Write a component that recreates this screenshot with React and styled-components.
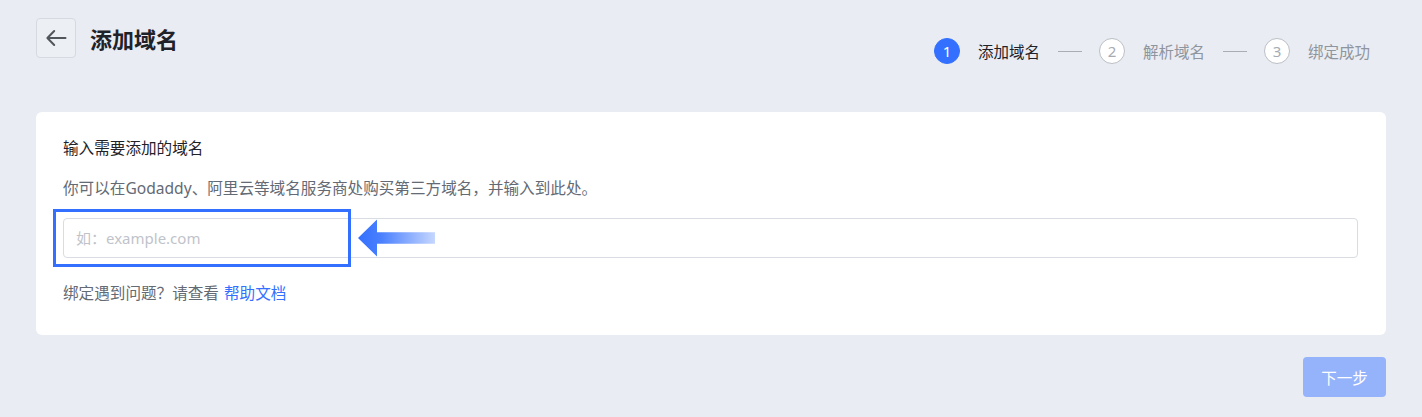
import React from "react";
import styled, { createGlobalStyle } from "styled-components";

const GlobalStyle = createGlobalStyle`
  html, body { margin: 0; padding: 0; }
  body {
    background: #e9ecf2;
    font-family: "Noto Sans", "Noto Sans CJK SC", sans-serif;
    color: #1f2329;
  }
`;

const Page = styled.div`
  padding: 18px 36px 20px 36px;
  box-sizing: border-box;
  width: 1422px;
  min-height: 417px;
  display: flex;
  flex-direction: column;
`;

const Header = styled.div`
  display: flex;
  justify-content: space-between;
  align-items: flex-start;
  height: 94px;
`;

const TitleGroup = styled.div`
  display: flex;
  align-items: center;
  gap: 14px;
`;

const BackButton = styled.button`
  width: 40px;
  height: 40px;
  box-sizing: border-box;
  border: 1px solid #d5d9e0;
  border-radius: 4px;
  background: #eceff4;
  display: flex;
  align-items: center;
  justify-content: center;
  padding: 0;
  cursor: pointer;
`;

const Title = styled.h1`
  margin: 0;
  font-size: 22px;
  font-weight: 700;
  line-height: 30px;
  color: #1f2329;
  font-family: "Noto Sans CJK SC", sans-serif;
`;

const Steps = styled.div`
  display: flex;
  align-items: center;
  margin-top: 20px;
  margin-right: 16px;
`;

const Step = styled.div`
  display: flex;
  align-items: center;
  gap: 18px;
`;

const StepCircle = styled.span`
  width: 26px;
  height: 26px;
  box-sizing: border-box;
  border-radius: 50%;
  display: flex;
  align-items: center;
  justify-content: center;
  font-size: 15px;
  background: ${(p) => (p.$active ? "#3370ff" : "#ffffff")};
  border: 1px solid ${(p) => (p.$active ? "#3370ff" : "#bbbfc4")};
  color: ${(p) => (p.$active ? "#ffffff" : "#a6abb3")};
`;

const StepLabel = styled.span`
  font-size: 15.5px;
  line-height: 22px;
  color: ${(p) => (p.$active ? "#1f2329" : "#8f959e")};
  font-family: "Noto Sans CJK SC", sans-serif;
`;

const Connector = styled.span`
  width: 24px;
  height: 1px;
  background: #a9aeb6;
  margin: 0 17px 0 18px;
`;

const Card = styled.div`
  background: #ffffff;
  border-radius: 6px;
  padding: 24px 28px 32px 27px;
`;

const CardTitle = styled.div`
  font-size: 15.6px;
  line-height: 22px;
  color: #1f2329;
  font-family: "Noto Sans CJK SC", sans-serif;
`;

const Desc = styled.div`
  margin-top: 19px;
  font-size: 15.6px;
  line-height: 22px;
  color: #646a73;
  font-family: "Noto Sans", "Noto Sans CJK SC", sans-serif;
`;

const InputWrap = styled.div`
  position: relative;
  margin-top: 19px;
`;

const Input = styled.input`
  width: 100%;
  height: 40px;
  box-sizing: border-box;
  border: 1px solid #d9dce3;
  border-radius: 4px;
  padding: 0 12px;
  font-size: 15px;
  font-family: "Noto Sans", "Noto Sans CJK SC", sans-serif;
  color: #1f2329;
  outline: none;
  &::placeholder {
    color: #bfc3ca;
  }
`;

const Highlight = styled.div`
  position: absolute;
  left: -10px;
  top: -9px;
  width: 298px;
  height: 58px;
  box-sizing: border-box;
  border: 3px solid #3370ff;
  pointer-events: none;
`;

const Arrow = styled.svg`
  position: absolute;
  left: 295px;
  top: 1px;
  pointer-events: none;
`;

const Help = styled.div`
  margin-top: 23px;
  font-size: 15.6px;
  line-height: 22px;
  color: #646a73;
  font-family: "Noto Sans CJK SC", sans-serif;
`;

const Link = styled.a`
  color: #3370ff;
  text-decoration: none;
  margin-left: 5px;
`;

const Footer = styled.div`
  display: flex;
  justify-content: flex-end;
  margin-top: 22px;
`;

const NextButton = styled.button`
  width: 83px;
  height: 40px;
  border: none;
  border-radius: 4px;
  background: #94b3fb;
  color: #ffffff;
  font-size: 15.5px;
  font-family: "Noto Sans CJK SC", sans-serif;
  cursor: not-allowed;
`;

const steps = [
  { n: 1, label: "添加域名", active: true },
  { n: 2, label: "解析域名" },
  { n: 3, label: "绑定成功" },
];

export default function App() {
  return (
    <>
      <GlobalStyle />
      <Page>
        <Header>
          <TitleGroup>
            <BackButton aria-label="返回">
              <svg width="24" height="24" viewBox="0 0 24 24" fill="none">
                <path
                  d="M21.5 12H3.8M10.2 5L3.4 12l6.8 7"
                  stroke="#51565d"
                  strokeWidth="2"
                  strokeLinecap="round"
                  strokeLinejoin="round"
                />
              </svg>
            </BackButton>
            <Title>添加域名</Title>
          </TitleGroup>
          <Steps>
            {steps.map((s, i) => (
              <React.Fragment key={s.n}>
                {i > 0 && <Connector />}
                <Step>
                  <StepCircle $active={s.active}>{s.n}</StepCircle>
                  <StepLabel $active={s.active}>{s.label}</StepLabel>
                </Step>
              </React.Fragment>
            ))}
          </Steps>
        </Header>
        <Card>
          <CardTitle>输入需要添加的域名</CardTitle>
          <Desc>你可以在Godaddy、阿里云等域名服务商处购买第三方域名，并输入到此处。</Desc>
          <InputWrap>
            <Input placeholder="如：example.com" />
            <Highlight />
            <Arrow width="78" height="38" viewBox="0 0 78 38">
              <defs>
                <linearGradient id="arrowGrad" x1="0" y1="0" x2="1" y2="0">
                  <stop offset="0" stopColor="#3370ff" />
                  <stop offset="0.3" stopColor="#4a80ff" />
                  <stop offset="1" stopColor="#c6d7ff" />
                </linearGradient>
              </defs>
              <path
                d="M0 19L19 0.5V13.2H77V24.8H19V37.5Z"
                fill="url(#arrowGrad)"
              />
            </Arrow>
          </InputWrap>
          <Help>
            绑定遇到问题？请查看<Link href="#">帮助文档</Link>
          </Help>
        </Card>
        <Footer>
          <NextButton disabled>下一步</NextButton>
        </Footer>
      </Page>
    </>
  );
}
